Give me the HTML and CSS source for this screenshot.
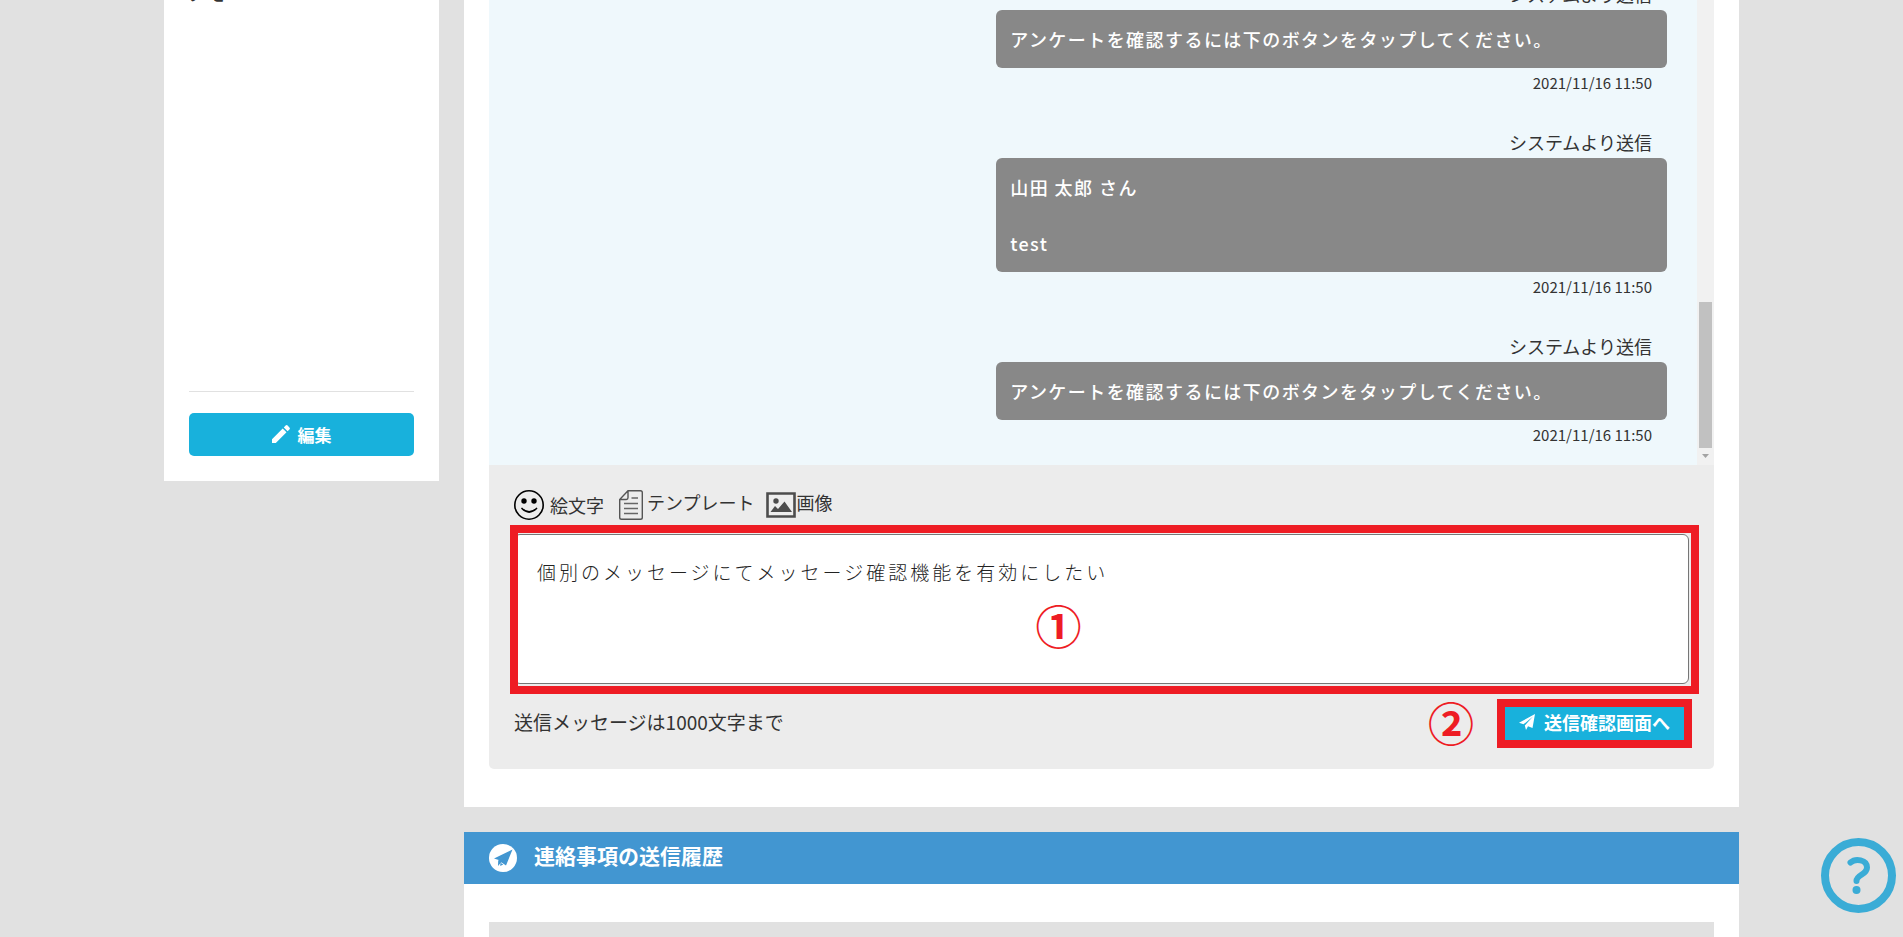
FILE: index.html
```html
<!DOCTYPE html>
<html lang="ja">
<head>
<meta charset="utf-8">
<meta name="viewport" content="width=device-width, initial-scale=1">
<title>メッセージ</title>
<link rel="stylesheet" href="styles.css">
</head>
<body>
<div class="page">
  <aside class="sidebar">
    <h2 class="memo-title">メモ</h2>
    <div class="memo-body"></div>
    <button class="btn btn-edit" type="button">
      <svg class="icon-pencil" viewBox="0 0 18 18" aria-hidden="true"><path fill="#fff" d="M0 14.2 10.7 3.5l3.8 3.8L3.8 18H0zM11.8 2.4 13.6.6q1-1 2 0l1.8 1.8q1 1 0 2l-1.8 1.8z"/></svg>
      編集
    </button>
  </aside>

  <main class="main">
    <section class="card">
      <div class="chat">
        <div class="chat-list">
          <article class="msg">
            <p class="msg-sender">システムより送信</p>
            <p class="msg-bubble">アンケートを確認するには下のボタンをタップしてください。</p>
            <time class="msg-date">2021/11/16 11:50</time>
          </article>
          <article class="msg">
            <p class="msg-sender">システムより送信</p>
            <p class="msg-bubble">山田 太郎 さん<br><br>test</p>
            <time class="msg-date">2021/11/16 11:50</time>
          </article>
          <article class="msg">
            <p class="msg-sender">システムより送信</p>
            <p class="msg-bubble">アンケートを確認するには下のボタンをタップしてください。</p>
            <time class="msg-date">2021/11/16 11:50</time>
          </article>
        </div>
        <div class="scrollbar" aria-hidden="true">
          <div class="scroll-thumb"></div>
          <svg class="scroll-arrow" viewBox="0 0 7 4"><path fill="#a3a3a3" d="M0 0h7L3.500 4z"/></svg>
        </div>
      </div>

      <form class="composer">
        <div class="tools">
          <button class="tool tool-emoji" type="button">
            <svg width="30" height="30" viewBox="0 0 30 30" aria-hidden="true"><circle cx="15" cy="15" r="14.200" fill="none" stroke="#000" stroke-width="1.600"/><circle cx="10" cy="11" r="2.700"/><circle cx="20" cy="11" r="2.700"/><path d="M8 18.500q7 7 14.500 0" fill="none" stroke="#000" stroke-width="1.700" stroke-linecap="round"/></svg>
            <span>絵文字</span>
          </button>
          <button class="tool tool-template" type="button">
            <svg width="30" height="30" viewBox="0 0 30 30" aria-hidden="true"><path d="M12 .8h12.500q1.800 0 1.800 1.800v24.800q0 1.800-1.800 1.800h-19q-1.800 0-1.800-1.800V9.500zM12 .8v7q0 1.700-1.700 1.700H3.700" fill="none" stroke="#555" stroke-width="1.400"/><path d="M15.500 8H22M8 13.500h14M8 18.500h14M8 23.500h14" stroke="#666" stroke-width="1.300"/></svg>
            <span>テンプレート</span>
          </button>
          <button class="tool tool-image" type="button">
            <svg width="30" height="30" viewBox="0 0 30 30" aria-hidden="true"><path d="M1.500 3.500h27v23h-27z" fill="#eee" stroke="#4d4d4d" stroke-width="2.600"/><circle cx="10" cy="11" r="2.700" fill="#4d4d4d"/><path d="M4.500 22 9 16l3 3 6.500-7.500L26 22z" fill="#4d4d4d"/></svg>
            <span>画像</span>
          </button>
        </div>
        <div class="field">
          <textarea class="message-input" aria-label="メッセージ">個別のメッセージにてメッセージ確認機能を有効にしたい</textarea>
          <div class="mark-frame"></div>
          <span class="mark-number mark-one">①</span>
        </div>
        <div class="composer-foot">
          <p class="limit-note">送信メッセージは1000文字まで</p>
          <span class="mark-number">②</span>
          <button class="btn btn-send" type="button">
            <svg class="icon-plane" viewBox="0 0 16 16" aria-hidden="true"><path fill="#fff" d="M16 0 13.500 14 9 12.300 7 16l-1.200-4.500L14 2.500 4.500 10.300 0 8.800z"/></svg>
            送信確認画面へ
          </button>
        </div>
      </form>
    </section>

    <section class="card-history">
      <header class="history-head">
        <svg width="28" height="28" viewBox="0 0 28 28" aria-hidden="true"><circle cx="14" cy="14" r="14" fill="#fff"/><path fill="#4296d1" d="M23.500 5.500 5 14.500l4.800 1.500zM23.500 5.500 10.800 17.200 17 21.500zM23.500 5.500 9.200 16.400 9 22z"/><path fill="#4296d1" d="m11.500 18.700 2.800 1.700L11.200 22z"/></svg>
        <h2 class="history-title">連絡事項の送信履歴</h2>
      </header>
      <div class="history-body"><div class="history-table"></div></div>
    </section>
  </main>
</div>

<button class="help" type="button" aria-label="ヘルプ">
  <svg width="75" height="75" viewBox="0 0 75 75" aria-hidden="true"><circle cx="37.500" cy="37.500" r="33.500" fill="none" stroke="#3aacd6" stroke-width="8"/><path d="M29.500 24.500c5-4.500 16.500-3 16.500 5 0 7.500-10.500 7-10.500 13.500" fill="none" stroke="#3aacd6" stroke-width="6"  stroke-linecap="round"/><circle cx="35.500" cy="52" r="4" fill="#3aacd6"/></svg>
</button>
</body>
</html>
```
FILE: styles.css
```css
* { box-sizing: border-box; }

body {
  margin: 0;
  height: 100vh;
  overflow: hidden;
  background: #e1e1e1;
  color: #333;
  font-family: "Noto Sans CJK JP", sans-serif;
  font-size: 18px;
}

h2, p { margin: 0; }

button {
  font-family: inherit;
  border: 0;
  padding: 0;
  background: none;
  color: inherit;
  cursor: pointer;
}

.page {
  display: flex;
  align-items: flex-start;
  gap: 25px;
  max-width: 1575px;
  margin: 0 auto;
}

.sidebar {
  flex: 0 0 275px;
  padding: 0 25px 25px;
  background: #fff;
}

.memo-title {
  margin-top: -21px;
  font-size: 18px;
  font-weight: 500;
  line-height: 28px;
}

.memo-body {
  height: 385px;
  margin-bottom: 21px;
  border-bottom: 1px solid #e1e1e1;
}

.btn {
  display: flex;
  align-items: center;
  justify-content: center;
  gap: 8px;
  background: #18b1dc;
  color: #fff;
  font-weight: 700;
}

.btn-edit {
  width: 100%;
  height: 43px;
  padding-bottom: 1px;
  border-radius: 5px;
  font-size: 17px;
}

.icon-pencil { width: 18px; height: 18px; }

.main {
  flex: 1;
  min-width: 0;
}

.card {
  padding: 0 25px 38px;
  margin-bottom: 25px;
  background: #fff;
}

.chat {
  display: flex;
  height: 465px;
  background: #eff8fc;
}

.chat-list {
  flex: 1;
  display: flex;
  flex-direction: column;
  justify-content: flex-end;
  gap: 30px;
  padding: 0 30px 15px 60px;
  overflow: hidden;
}

.msg {
  width: 60%;
  margin-left: auto;
}

.msg-sender {
  padding: 0 15px 2px 0;
  line-height: 28px;
  text-align: right;
}

.msg-bubble {
  padding: 15px 14px;
  border-radius: 6px;
  background: #888;
  color: #fff;
  font-weight: 500;
  line-height: 28px;
  letter-spacing: 0.08em;
}

.msg-date {
  display: block;
  padding-right: 15px;
  font-size: 15px;
  line-height: 30px;
  text-align: right;
}

.scrollbar {
  display: flex;
  flex-direction: column;
  justify-content: flex-end;
  align-items: center;
  gap: 6px;
  width: 17px;
  padding: 0 2px 7px;
  background: #f1f1f1;
}

.scroll-thumb {
  width: 13px;
  height: 146px;
  background: #c1c1c1;
}

.scroll-arrow { width: 7px; height: 4px; }

.composer {
  padding: 25px 25px 21px;
  border-radius: 0 0 5px 5px;
  background: #ececec;
}

.tools {
  display: flex;
  gap: 12px;
  margin-bottom: 14px;
}

.tool {
  display: flex;
  align-items: flex-start;
  font-size: 18px;
  line-height: 24px;
}

.tool-emoji {
  gap: 6px;
  line-height: 30px;
}

.tool-template { gap: 1px; }

.field { position: relative; }

.message-input {
  display: block;
  width: 100%;
  height: 150px;
  padding: 23px 22px;
  border: 1px solid #767676;
  border-radius: 6px;
  background: #fff;
  color: #222;
  font-family: inherit;
  font-size: 19px;
  font-weight: 300;
  line-height: 28px;
  letter-spacing: 3px;
  resize: none;
}

/* Numbered annotations over the form */
.mark-frame {
  position: absolute;
  inset: -9px -10px -10px -4px;
  border: 8px solid #ee1c24;
  pointer-events: none;
}

.mark-number {
  padding-bottom: 5px;
  color: #ee1c24;
  font-size: 46px;
  font-weight: 700;
  line-height: 44px;
}

.mark-one {
  position: absolute;
  top: 68px;
  left: 50%;
  margin-left: -66px;
}

.composer-foot {
  display: flex;
  align-items: center;
  margin-top: 15px;
}

.limit-note {
  flex: 1;
  padding-bottom: 3px;
  font-size: 19px;
  line-height: 28px;
}

.btn-send {
  height: 49px;
  margin: 0 -3px 0 23px;
  padding: 0 14px 4px;
  gap: 9px;
  border: 8px solid #ee1c24;
  font-size: 18px;
}

.icon-plane { width: 16px; height: 16px; }

.history-head {
  display: flex;
  align-items: center;
  gap: 17px;
  height: 52px;
  padding: 0 25px;
  background: #4296d1;
  color: #fff;
}

.history-title {
  padding-bottom: 6px;
  font-size: 21px;
  font-weight: 700;
  line-height: 28px;
}

.history-body {
  padding: 38px 25px 0;
  background: #fff;
}

.history-table {
  height: 120px;
  background: #e1e1e1;
}

.help {
  position: fixed;
  right: 7px;
  bottom: 24px;
  width: 75px;
  height: 75px;
}
```
